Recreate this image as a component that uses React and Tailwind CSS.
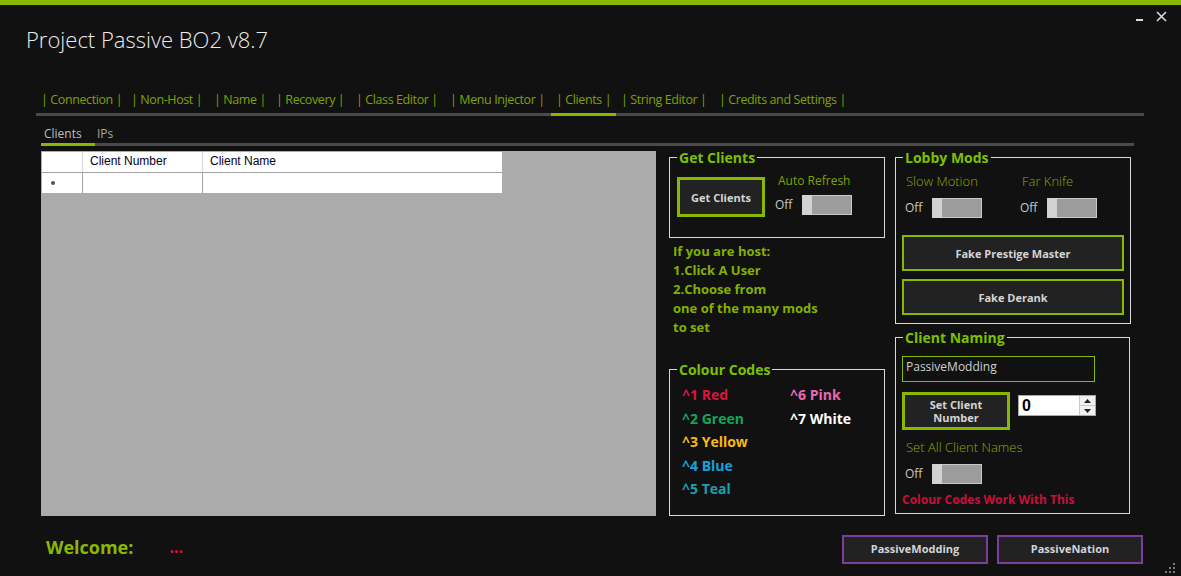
import React from 'react';

const tabs = [
  { label: '| Connection |', w: 'w-[90px]' },
  { label: '| Non-Host |', w: 'w-[83px]' },
  { label: '| Name |', w: 'w-[62px]' },
  { label: '| Recovery |', w: 'w-[80px]' },
  { label: '| Class Editor |', w: 'w-[94px]' },
  { label: '| Menu Injector |', w: 'w-[106px]' },
  { label: '| Clients |', w: 'w-[65px]', active: true },
  { label: '| String Editor |', w: 'w-[98px]' },
  { label: '| Credits and Settings |', w: 'w-[140px]' },
];

const colourCodes = [
  { code: '^1 Red', color: 'text-[#dc143c]' },
  { code: '^6 Pink', color: 'text-[#e868b4]' },
  { code: '^2 Green', color: 'text-[#10a858]' },
  { code: '^7 White', color: 'text-white' },
  { code: '^3 Yellow', color: 'text-[#f8b818]' },
  { code: '', color: '' },
  { code: '^4 Blue', color: 'text-[#18a0dc]' },
  { code: '', color: '' },
  { code: '^5 Teal', color: 'text-[#1aa0ae]' },
];

// little on/off switch, always "Off" in the screenshot
const Toggle = () => (
  <div className="flex items-center">
    <span className="w-[27px] text-[12px] text-[#c8c8c8]">Off</span>
    <div className="flex h-[20px] w-[50px] border border-[#c8c8c8] bg-[#9c9c9c]">
      <div className="-my-px -ml-px w-[10px] bg-[#d2d2d2]" />
    </div>
  </div>
);

const Group = ({ title, className, inner, children }) => (
  <fieldset className={`border border-[#d8d8d8] ${className}`}>
    <legend className="ml-[7px] px-[2px] text-[14px] font-bold leading-[17px] text-[#7cc000]">{title}</legend>
    <div className={inner}>{children}</div>
  </fieldset>
);

const GreenButton = ({ className, children }) => (
  <button className={`bg-[#222222] text-[11px] font-bold leading-[13px] text-[#d4d4d4] ${className}`}>
    {children}
  </button>
);

const App = () => {
  return (
    <div className="relative flex h-[576px] w-[1181px] flex-col overflow-hidden border-t-[5px] border-[#8ab800] bg-[#111111] font-['Open_Sans','Noto_Sans',sans-serif]">
      {/* title bar */}
      <div className="flex h-[70px] items-start justify-between">
        <h1 className="ml-[26px] mt-[19px] text-[22px] font-light leading-[30px] text-[#ececec]">Project Passive BO2 v8.7</h1>
        <div className="mr-[14px] mt-[6px] flex items-center gap-[13px] text-[#dcdcdc]">
          <span className="mt-[2px] block h-[2px] w-[7px] bg-[#dcdcdc]" />
          <svg width="11" height="11" viewBox="0 0 11 11" className="mb-[4px]">
            <path d="M1 1 L10 10 M10 1 L1 10" stroke="#dcdcdc" strokeWidth="1.6" />
          </svg>
        </div>
      </div>

      {/* main tabs */}
      <div className="ml-[36px] mt-[14px] flex w-[1108px] border-b-[3px] border-[#4a4a4a]">
        {tabs.map((t) => (
          <div
            key={t.label}
            className={`${t.w} h-[24px] whitespace-nowrap pl-[5px] pt-px text-[12.5px] leading-[20px] tracking-[-0.4px] text-[#7ea200] ${
              t.active ? '-mb-[3px] h-[27px] border-b-[3px] border-[#8ab800]' : ''
            }`}
          >
            {t.label}
          </div>
        ))}
      </div>

      {/* sub tabs */}
      <div className="ml-[41px] mt-[8px] flex w-[1093px] border-b-[3px] border-[#4a4a4a]">
        <div className="-mb-[3px] h-[22px] w-[54px] border-b-[3px] border-[#8ab800] pl-[3px] pt-[2px] text-[12px] leading-[16px] text-[#bdbdbd]">Clients</div>
        <div className="h-[19px] pl-[2px] pt-[2px] text-[12px] leading-[16px] text-[#a8a8a8]">IPs</div>
      </div>

      {/* content */}
      <div className="mt-[3px] flex">
        <div className="ml-[41px] mt-[2px] h-[365px] w-[615px] bg-[#ababab] pl-px pt-px font-['Liberation_Sans',sans-serif] text-[12px] text-[#000020]">
          <div className="flex h-[20px] w-[460px] bg-white">
            <div className="w-[41px] border-r border-[#d8d8d8]" />
            <div className="w-[120px] border-r border-[#d8d8d8] pl-[7px] leading-[19px]">Client Number</div>
            <div className="flex-1 pl-[7px] leading-[19px]">Client Name</div>
          </div>
          <div className="flex h-[21px] w-[460px] border-t border-[#a0a0a0] bg-white">
            <div className="flex w-[41px] items-center border-r border-[#a0a0a0] pl-[9px]">
              <span className="block h-[4px] w-[4px] rounded-full bg-[#555555]" />
            </div>
            <div className="w-[120px] border-r border-[#a0a0a0]" />
            <div className="flex-1" />
          </div>
        </div>

        {/* middle column */}
        <div className="ml-[13px] flex w-[216px] flex-col">
          <Group title="Get Clients" className="h-[89px]" inner="mt-[11px] flex pl-[7px]">
            <GreenButton className="h-[40px] w-[88px] border-[3px] border-[#8ab800]">Get Clients</GreenButton>
            <div className="ml-[10px] flex flex-col">
              <span className="-mt-[4px] ml-[3px] text-[12px] leading-[16px] text-[#7ea200]">Auto Refresh</span>
              <div className="mt-[6px]"><Toggle /></div>
            </div>
          </Group>

          <div className="ml-[4px] mt-[4px] text-[13px] font-bold leading-[19px] text-[#84b000]">
            <p>If you are host:</p>
            <p>1.Click A User</p>
            <p>2.Choose from</p>
            <p>one of the many mods</p>
            <p>to set</p>
          </div>

          <Group title="Colour Codes" className="mt-[24px] h-[155px]" inner="mt-[5px] grid grid-cols-[108px_1fr] pl-[12px] text-[14px] font-bold leading-[23.5px]">
            {colourCodes.map((c, i) => (
              <span key={i} className={c.color}>{c.code}</span>
            ))}
          </Group>
        </div>

        {/* right column */}
        <div className="ml-[10px] flex w-[235px] flex-col">
          <Group title="Lobby Mods" className="h-[175px]" inner="px-[6px]">
            <div className="mt-[7px] flex text-[13px] font-light leading-[16px] text-[#86aa00]">
              <div className="ml-[4px] w-[115px]">Slow Motion</div>
              <div className="ml-[1px]">Far Knife</div>
            </div>
            <div className="mt-[9px] flex">
              <div className="ml-[3px] w-[115px]"><Toggle /></div>
              <Toggle />
            </div>
            <GreenButton className="mt-[17px] h-[36px] w-[222px] border-2 border-[#8ab800]">Fake Prestige Master</GreenButton>
            <GreenButton className="mt-[8px] h-[36px] w-[222px] border-2 border-[#8ab800]">Fake Derank</GreenButton>
          </Group>

          <Group title="Client Naming" className="mt-[5px] h-[185px]" inner="px-[6px]">
            <div className="mt-[10px] h-[26px] w-[193px] border border-[#8ab800] pl-[3px] pt-[2px] text-[12px] leading-[16px] text-[#d0d0d0]">PassiveModding</div>
            <div className="mt-[10px] flex items-start">
              <GreenButton className="h-[38px] w-[108px] border-[3px] border-[#8ab800]">
                Set Client<br />Number
              </GreenButton>
              <div className="ml-[8px] mt-[3px] flex h-[21px] w-[78px] items-center border border-[#a8a8a8] bg-white">
                <span className="flex-1 pl-[3px] font-['Liberation_Sans',sans-serif] text-[16px] font-bold leading-[19px] text-black">0</span>
                <div className="flex h-full w-[16px] flex-col border-l border-[#c8c8c8] bg-[#f0f0f0]">
                  <div className="flex flex-1 items-center justify-center border-b border-[#c8c8c8]">
                    <svg width="7" height="4" viewBox="0 0 7 4"><path d="M0 4 L3.5 0 L7 4 Z" fill="#222" /></svg>
                  </div>
                  <div className="flex flex-1 items-center justify-center">
                    <svg width="7" height="4" viewBox="0 0 7 4"><path d="M0 0 L3.5 4 L7 0 Z" fill="#222" /></svg>
                  </div>
                </div>
              </div>
            </div>
            <div className="ml-[4px] mt-[9px] text-[13px] font-light leading-[16px] text-[#86aa00]">Set All Client Names</div>
            <div className="ml-[3px] mt-[9px]"><Toggle /></div>
            <div className="mt-[8px] text-[12px] font-bold leading-[16px] text-[#c8103c]">Colour Codes Work With This</div>
          </Group>
        </div>
      </div>

      {/* footer */}
      <div className="flex flex-1 items-start">
        <div className="ml-[46px] mt-[20px] text-[18px] font-bold leading-[22px] text-[#8ab800]">Welcome:</div>
        <div className="ml-[36px] mt-[20px] text-[16px] font-bold leading-[22px] text-[#dc143c]">...</div>
        <div className="ml-auto mr-[38px] mt-[19px] flex gap-[9px]">
          <button className="h-[29px] w-[146px] border-2 border-[#7a3f9c] bg-[#222222] text-[11px] font-bold text-[#d4d4d4]">PassiveModding</button>
          <button className="h-[29px] w-[146px] border-2 border-[#7a3f9c] bg-[#222222] text-[11px] font-bold text-[#d4d4d4]">PassiveNation</button>
        </div>
      </div>

      {/* resize grip */}
      <svg width="12" height="12" viewBox="0 0 12 12" className="absolute bottom-[2px] right-[5px]">
        {[[10, 2], [10, 6], [6, 6], [10, 10], [6, 10], [2, 10]].map(([x, y]) => (
          <rect key={`${x}-${y}`} x={x - 1} y={y - 1} width="2" height="2" fill="#7a7a7a" />
        ))}
      </svg>
    </div>
  );
};

export default App;
